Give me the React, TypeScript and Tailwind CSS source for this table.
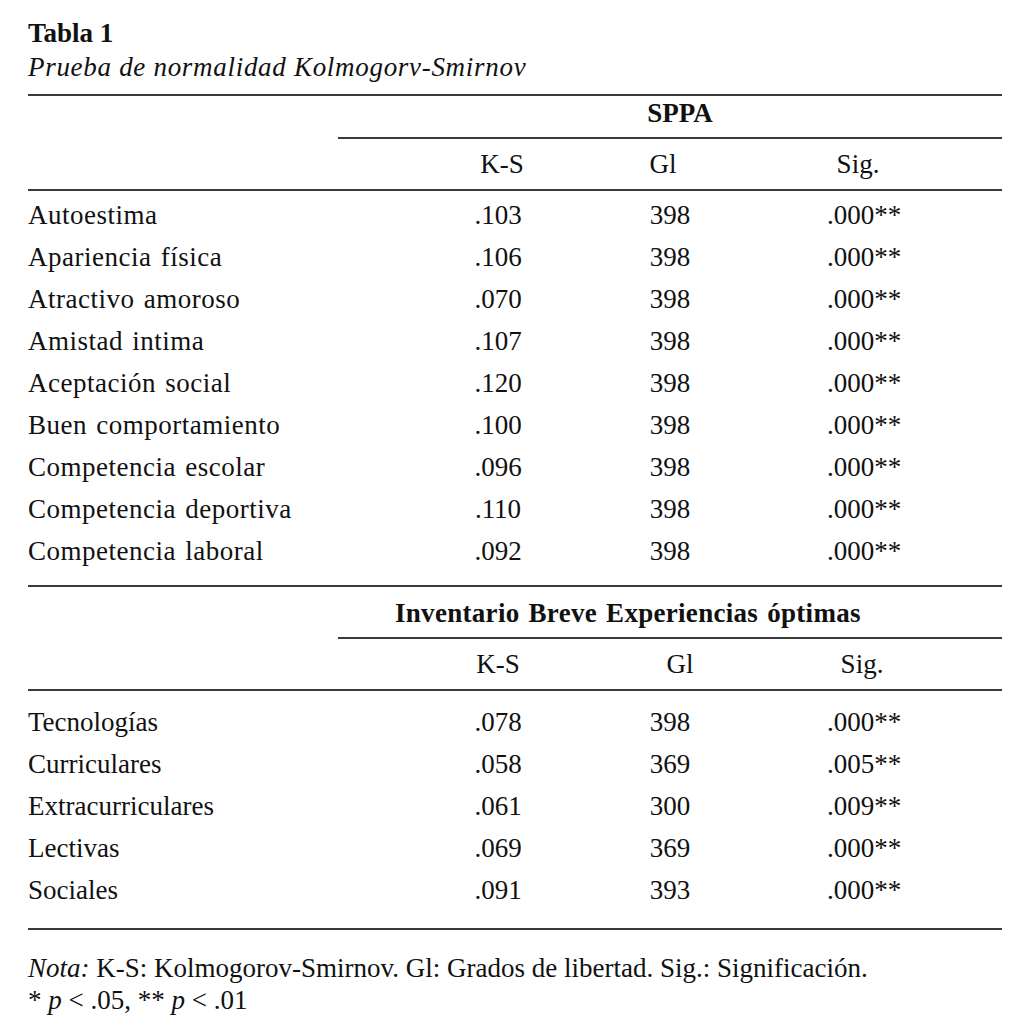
const sppa = [
  ["Autoestima", ".103", "398", ".000**"],
  ["Apariencia física", ".106", "398", ".000**"],
  ["Atractivo amoroso", ".070", "398", ".000**"],
  ["Amistad intima", ".107", "398", ".000**"],
  ["Aceptación social", ".120", "398", ".000**"],
  ["Buen comportamiento", ".100", "398", ".000**"],
  ["Competencia escolar", ".096", "398", ".000**"],
  ["Competencia deportiva", ".110", "398", ".000**"],
  ["Competencia laboral", ".092", "398", ".000**"],
];

const inventario = [
  ["Tecnologías", ".078", "398", ".000**"],
  ["Curriculares", ".058", "369", ".005**"],
  ["Extracurriculares", ".061", "300", ".009**"],
  ["Lectivas", ".069", "369", ".000**"],
  ["Sociales", ".091", "393", ".000**"],
];

function Rule({ indent }: { indent?: boolean }) {
  return <div className={indent ? "ml-[310px] h-[2px] bg-[#3a3a3a]" : "h-[2px] bg-[#3a3a3a]"} />;
}

function Row({ cells, wide }: { cells: string[]; wide?: boolean }) {
  return (
    <div className="flex h-[42px] items-center leading-[42px]">
      <div className={wide ? "w-[390px] tracking-[0.5px] [word-spacing:2px]" : "w-[390px]"}>{cells[0]}</div>
      <div className="w-[160px] text-center">{cells[1]}</div>
      <div className="w-[184px] text-center">{cells[2]}</div>
      <div className="w-[200px] text-center pl-[4px]">{cells[3]}</div>
    </div>
  );
}

export default function App() {
  return (
    <div className="w-[1014px] h-[1024px] bg-white text-[#111] font-['Liberation_Serif',serif] text-[27px]">
      <div className="pl-[28px] pr-[12px] pt-[16px]">
        <div className="font-bold leading-[34px]">Tabla 1</div>
        <div className="italic leading-[34px] tracking-[0.7px]">Prueba de normalidad Kolmogorv-Smirnov</div>
        <div className="mt-[10px]">
          <Rule />
          <div className="h-[41px] leading-[34px] font-bold text-center pl-[330px]">SPPA</div>
          <Rule indent />
          <div className="flex h-[50px] leading-[50px]">
            <div className="w-[390px]" />
            <div className="w-[160px] text-center pl-[8px]">K-S</div>
            <div className="w-[184px] text-center pr-[14px]">Gl</div>
            <div className="w-[200px] text-center pr-[8px]">Sig.</div>
          </div>
          <Rule />
          <div className="pt-[3px] pb-[13px]">
            {sppa.map((r, i) => (
              <Row key={i} cells={r} wide />
            ))}
          </div>
          <Rule />
          <div className="h-[50px] leading-[52px] font-bold pl-[367px] tracking-[0.3px] [word-spacing:2px]">
            Inventario Breve Experiencias óptimas
          </div>
          <Rule indent />
          <div className="flex h-[50px] leading-[50px]">
            <div className="w-[390px]" />
            <div className="w-[160px] text-center">K-S</div>
            <div className="w-[184px] text-center pl-[20px]">Gl</div>
            <div className="w-[200px] text-center">Sig.</div>
          </div>
          <Rule />
          <div className="pt-[10px] pb-[17px]">
            {inventario.map((r, i) => (
              <Row key={i} cells={r} />
            ))}
          </div>
          <Rule />
        </div>
        <div className="pt-[22px] text-[27px] leading-[32px]">
          <div>
            <span className="italic">Nota:</span> K-S: Kolmogorov-Smirnov. Gl: Grados de libertad. Sig.: Significación.
          </div>
          <div>
            * <span className="italic">p</span> &lt; .05, ** <span className="italic">p</span> &lt; .01
          </div>
        </div>
      </div>
    </div>
  );
}
